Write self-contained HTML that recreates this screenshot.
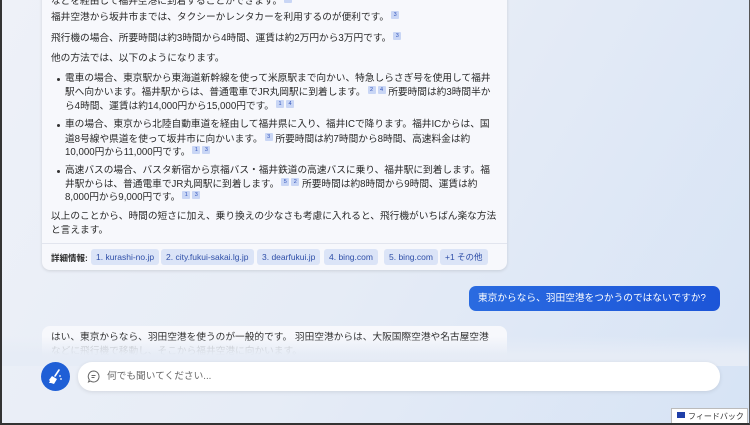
<!DOCTYPE html><html><head><meta charset="utf-8"><style>
*{margin:0;padding:0;box-sizing:border-box}
body{width:750px;height:425px;overflow:hidden;position:relative;font-family:"Liberation Sans","Noto Sans CJK JP",sans-serif;background:linear-gradient(120deg,#eef1f8 0%,#e6ecf6 50%,#d6e3f5 100%);color:#222}
.frame{position:absolute;left:0;top:0;width:750px;height:425px;border-left:2px solid #333;border-bottom:2px solid #333;border-right:1px solid #555;z-index:9;pointer-events:none}
.card{position:absolute;left:42px;top:-10px;width:465px;height:280px;background:#f7f8fc;border-radius:8px;box-shadow:0 1px 3px rgba(0,0,0,.12)}
.l{position:absolute;font-size:9.7px;line-height:14px;white-space:nowrap;color:#2a2a2a}
.b{display:inline-block;width:8px;height:8px;background:#c9d6f5;color:#3355bb;font-size:5.5px;line-height:8px;text-align:center;border-radius:1px;vertical-align:4px;margin-left:2px}
.dot{position:absolute;width:3px;height:3px;border-radius:50%;background:#333}
.src{position:absolute;top:249px;height:16px;background:#dbe4f7;color:#2f4fa8;font-size:8.5px;line-height:16px;padding:0 5px;border-radius:3px;white-space:nowrap}
.sep{position:absolute;left:42px;top:243px;width:465px;height:1px;background:#e2e5ee}
</style></head><body>
<div class="frame"></div>
<div class="card"></div>
<div class="l" style="left:51px;top:-5px">などを経由して福井空港に到着することができます。<span class="b">3</span></div>
<div class="l" style="left:51px;top:11px">福井空港から坂井市までは、タクシーかレンタカーを利用するのが便利です。<span class="b">3</span></div>
<div class="l" style="left:51px;top:32px">飛行機の場合、所要時間は約3時間から4時間、運賃は約2万円から3万円です。<span class="b">3</span></div>
<div class="l" style="left:51px;top:52px">他の方法では、以下のようになります。</div>
<div class="dot" style="left:57px;top:78px"></div>
<div class="l" style="left:65px;top:72px">電車の場合、東京駅から東海道新幹線を使って米原駅まで向かい、特急しらさぎ号を使用して福井</div>
<div class="l" style="left:65px;top:86px">駅へ向かいます。福井駅からは、普通電車でJR丸岡駅に到着します。<span class="b">2</span><span class="b">4</span> 所要時間は約3時間半か</div>
<div class="l" style="left:65px;top:100px">ら4時間、運賃は約14,000円から15,000円です。<span class="b">1</span><span class="b">4</span></div>
<div class="dot" style="left:57px;top:124px"></div>
<div class="l" style="left:65px;top:118px">車の場合、東京から北陸自動車道を経由して福井県に入り、福井ICで降ります。福井ICからは、国</div>
<div class="l" style="left:65px;top:133px">道8号線や県道を使って坂井市に向かいます。<span class="b">3</span> 所要時間は約7時間から8時間、高速料金は約</div>
<div class="l" style="left:65px;top:146px">10,000円から11,000円です。<span class="b">1</span><span class="b">3</span></div>
<div class="dot" style="left:57px;top:170px"></div>
<div class="l" style="left:65px;top:164px">高速バスの場合、バスタ新宿から京福バス・福井鉄道の高速バスに乗り、福井駅に到着します。福</div>
<div class="l" style="left:65px;top:178px">井駅からは、普通電車でJR丸岡駅に到着します。<span class="b">5</span><span class="b">2</span> 所要時間は約8時間から9時間、運賃は約</div>
<div class="l" style="left:65px;top:191px">8,000円から9,000円です。<span class="b">1</span><span class="b">3</span></div>
<div class="l" style="left:51px;top:210px">以上のことから、時間の短さに加え、乗り換えの少なさも考慮に入れると、飛行機がいちばん楽な方法</div>
<div class="l" style="left:51px;top:224px">と言えます。</div>
<div class="sep"></div>
<div class="l" style="left:51px;top:251px;font-size:8.5px;font-weight:bold">詳細情報:</div>
<div class="src" style="left:91px">1. kurashi-no.jp</div>
<div class="src" style="left:161px">2. city.fukui-sakai.lg.jp</div>
<div class="src" style="left:257px">3. dearfukui.jp</div>
<div class="src" style="left:324px">4. bing.com</div>
<div class="src" style="left:384px">5. bing.com</div>
<div class="src" style="left:440px">+1 その他</div>
<div style="position:absolute;left:469px;top:286px;width:251px;height:25px;background:linear-gradient(90deg,#2a6be0,#1c55d8);border-radius:7px;color:#fff;font-size:9.7px;line-height:25px;padding-left:9px;white-space:nowrap">東京からなら、羽田空港をつかうのではないですか?</div>
<div style="position:absolute;left:42px;top:326px;width:465px;height:40px;background:#f7f8fc;border-radius:8px;overflow:hidden">
<div class="l" style="left:9px;top:5px">はい、東京からなら、羽田空港を使うのが一般的です。 羽田空港からは、大阪国際空港や名古屋空港</div>
<div class="l" style="left:9px;top:19px;color:#aaa">などに飛行機で移動し、そこから福井空港に向かいます。</div>
</div>
<div style="position:absolute;left:2px;top:336px;width:746px;height:30px;background:linear-gradient(rgba(230,236,246,0),rgba(230,236,246,.95) 60%,#e6ecf6)"></div>
<div style="position:absolute;left:41px;top:362px;width:29px;height:29px;border-radius:50%;background:#1f5fd6">
<svg width="29" height="29" viewBox="0 0 29 29"><path d="M18 8l-4 6" stroke="#fff" stroke-width="1.6" stroke-linecap="round"/><path d="M11 14l5 3-3 5-3-1-2 0 1-2-1-1z" fill="#fff"/><circle cx="19" cy="14" r="0.9" fill="#fff"/><circle cx="20" cy="17" r="0.9" fill="#fff"/></svg></div>
<div style="position:absolute;left:78px;top:362px;width:642px;height:29px;background:#fff;border-radius:14px;box-shadow:0 1px 4px rgba(0,0,0,.1)">
<svg style="position:absolute;left:9px;top:8px" width="13" height="13" viewBox="0 0 13 13"><path d="M6.5 1a5.5 5.5 0 1 1-3 10.1L1.5 12l.8-2.3A5.5 5.5 0 0 1 6.5 1z" fill="none" stroke="#666" stroke-width="1"/><path d="M4.5 5.5h4M4.5 7.5h3" stroke="#666" stroke-width="1"/></svg>
<div class="l" style="left:29px;top:8px;color:#666">何でも聞いてください...</div>
</div>
<div style="position:absolute;left:671px;top:408px;width:77px;height:17px;background:#fff;border:1px solid #bbb;font-size:8px;line-height:15px;padding-left:16px;color:#333">フィードバック</div>
<div style="position:absolute;left:677px;top:412px;width:8px;height:6px;background:#1f3fa8"></div>
</body></html>
